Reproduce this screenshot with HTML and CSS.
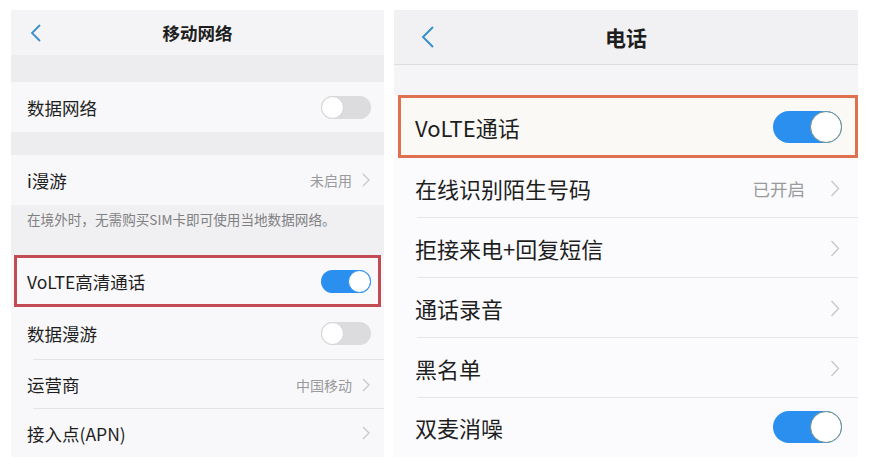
FILE: index.html
```html
<!DOCTYPE html>
<html lang="zh">
<head>
<meta charset="utf-8">
<link rel="stylesheet" href="styles.css">
</head>
<body>
<div class="wrap">
  <div class="panel left">
    <div class="hdr">
      <svg class="back" width="12" height="18" viewBox="0 0 12 18"><polyline points="10,1 2,9 10,17" fill="none" stroke="#3d8fc9" stroke-width="1.8"/></svg>
      <span class="title">移动网络</span>
    </div>
    <div class="band b1"></div>
    <div class="row"><span class="label">数据网络</span><span class="toggle off"><span class="knob"></span></span></div>
    <div class="band b2"></div>
    <div class="row"><span class="label">i漫游</span><span class="val">未启用</span><svg class="chev" width="8" height="14" viewBox="0 0 8 14"><polyline points="1,1 7,7 1,13" fill="none" stroke="#c8c8cc" stroke-width="1.3"/></svg></div>
    <div class="note">在境外时，无需购买SIM卡即可使用当地数据网络。</div>
    <div class="row boxed"><span class="label">VoLTE高清通话</span><span class="toggle on"><span class="knob"></span></span></div>
    <div class="row sep r4"><span class="label">数据漫游</span><span class="toggle off"><span class="knob"></span></span></div>
    <div class="row sep r5"><span class="label">运营商</span><span class="val">中国移动</span><svg class="chev" width="8" height="14" viewBox="0 0 8 14"><polyline points="1,1 7,7 1,13" fill="none" stroke="#c8c8cc" stroke-width="1.3"/></svg></div>
    <div class="row r6"><span class="label">接入点(APN)</span><svg class="chev" width="8" height="14" viewBox="0 0 8 14"><polyline points="1,1 7,7 1,13" fill="none" stroke="#c8c8cc" stroke-width="1.3"/></svg></div>
  </div>

  <div class="panel right">
    <div class="hdr">
      <svg class="back" width="15" height="23" viewBox="0 0 15 23"><polyline points="13,1.5 3,11.5 13,21.5" fill="none" stroke="#3d8fc9" stroke-width="2"/></svg>
      <span class="title">电话</span>
    </div>
    <div class="band"></div>
    <div class="row boxed"><span class="label">VoLTE通话</span><span class="toggle on"><span class="knob"></span></span></div>
    <div class="row sep"><span class="label">在线识别陌生号码</span><span class="val">已开启</span><svg class="chev" width="10" height="17" viewBox="0 0 10 17"><polyline points="1.5,1 8.5,8.5 1.5,16" fill="none" stroke="#c8c8cc" stroke-width="1.4"/></svg></div>
    <div class="row sep"><span class="label">拒接来电+回复短信</span><svg class="chev" width="10" height="17" viewBox="0 0 10 17"><polyline points="1.5,1 8.5,8.5 1.5,16" fill="none" stroke="#c8c8cc" stroke-width="1.4"/></svg></div>
    <div class="row sep"><span class="label">通话录音</span><svg class="chev" width="10" height="17" viewBox="0 0 10 17"><polyline points="1.5,1 8.5,8.5 1.5,16" fill="none" stroke="#c8c8cc" stroke-width="1.4"/></svg></div>
    <div class="row sep"><span class="label">黑名单</span><svg class="chev" width="10" height="17" viewBox="0 0 10 17"><polyline points="1.5,1 8.5,8.5 1.5,16" fill="none" stroke="#c8c8cc" stroke-width="1.4"/></svg></div>
    <div class="row last"><span class="label">双麦消噪</span><span class="toggle on"><span class="knob"></span></span></div>
  </div>
</div>
</body>
</html>
```

FILE: styles.css
```css
* { box-sizing: border-box; }
html, body { margin: 0; padding: 0; background: #ffffff; }
body {
  font-family: "Noto Sans CJK SC", "Noto Sans", sans-serif;
  color: #1e1e1e;
}
.wrap {
  display: flex;
  gap: 10px;
  padding: 10px 0 0 11px;
}
.panel {
  display: flex;
  flex-direction: column;
}
.left { width: 373px; background: #f8f8fa; }
.right { width: 464px; background: #fbfbfd; }

.hdr {
  display: flex;
  align-items: center;
  justify-content: center;
  position: relative;
}
.back { position: absolute; top: 50%; transform: translateY(-50%); }
.title { font-weight: bold; }

.left .hdr { height: 45px; background: #f4f4f6; }
.left .back { left: 19px; }
.left .title { font-size: 17.5px; }

.right .hdr { height: 55px; background: #f1f1f3; border-bottom: 1px solid #dcdcde; }
.right .back { left: 26px; }
.right .title { font-size: 21px; }

.band { background: #ededef; }
.left .b1 { height: 27px; }
.left .b2 { height: 23px; }
.right .band { height: 30px; background: #f5f5f7; }

.row {
  display: flex;
  align-items: center;
}
.label { flex: 1; }
.val { color: #9a9a9c; }

.left .row { height: 50px; padding: 0 13px 0 16px; font-size: 17.5px; }
.left .val { font-size: 14px; margin-right: 10px; }
.left .chev { margin-right: 1px; }
.left .row.boxed { height: 52px; margin: 0 3px; padding: 0 7px 0 10px; border: 3px solid #c24b54; background: #f9f8fa; }
.left .r4 { height: 53px; }
.left .r5 { height: 49px; }
.left .r6 { height: 48px; }
.left .sep {
  background: #f8f8fa linear-gradient(#e4e4e6, #e4e4e6) no-repeat 22px 100% / calc(100% - 22px) 1px;
}
.note {
  height: 50px;
  background: #f0f0f2;
  padding: 4px 0 0 16px;
  font-size: 13.6px;
  color: #808083;
}

.right .row { height: 60px; padding: 0 18px 0 21px; font-size: 22px; }
.right .val { font-size: 17.5px; margin-right: 25px; }
.right .row.boxed { height: 63px; margin-left: 4px; padding: 0 13px 0 14px; border: 3px solid #e0714f; background: #fbf9f5; }
.right .sep {
  background: #fbfbfd linear-gradient(#e6e6e8, #e6e6e8) no-repeat 23px 100% / calc(100% - 23px) 1px;
}
.right .row.last { height: 57px; padding-right: 16px; }

.toggle {
  display: flex;
  align-items: center;
  border-radius: 999px;
}
.knob { border-radius: 50%; background: #fff; }
.toggle.off { justify-content: flex-start; background: #dcdcde; }
.toggle.on { justify-content: flex-end; background: #2b8ff0; }

.left .toggle { width: 50px; height: 23px; }
.left .toggle .knob { width: 23px; height: 23px; }
.left .toggle.off .knob { border: 1px solid #d2d2d4; }
.left .toggle.on .knob { border: 1.5px solid #2b8ff0; }

.right .toggle { width: 69px; height: 32px; }
.right .toggle .knob { width: 32px; height: 32px; border: 1.5px solid #6f8f8c; }
```
